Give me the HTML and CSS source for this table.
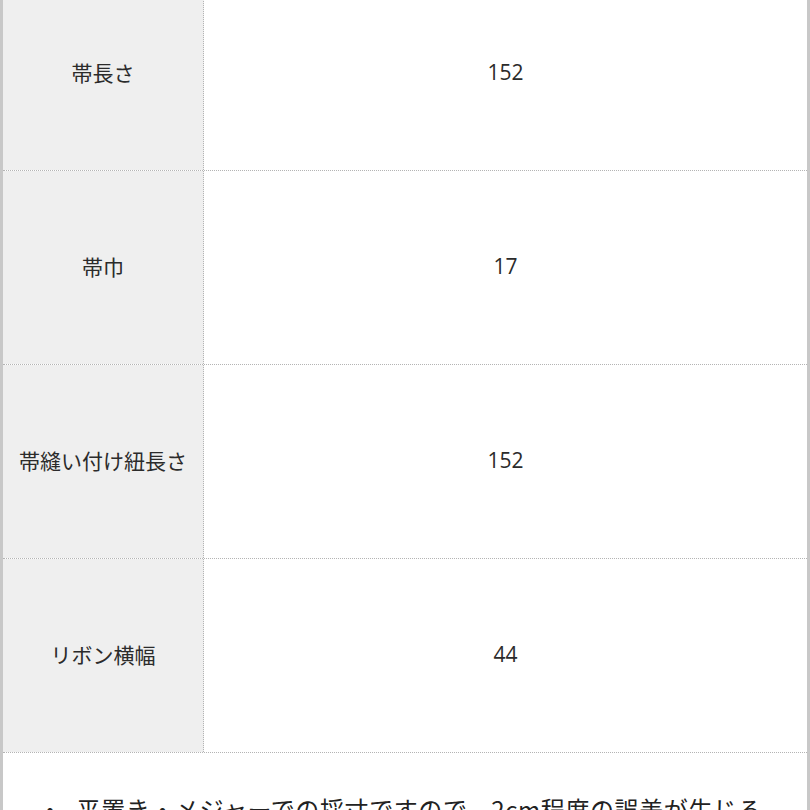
FILE: index.html
```html
<!DOCTYPE html>
<html lang="ja">
<head>
<meta charset="utf-8">
<link rel="stylesheet" href="styles.css">
</head>
<body>
<div class="frame">
  <div class="row">
    <div class="label">帯長さ</div>
    <div class="value">152</div>
  </div>
  <div class="row">
    <div class="label">帯巾</div>
    <div class="value">17</div>
  </div>
  <div class="row">
    <div class="label">帯縫い付け紐長さ</div>
    <div class="value">152</div>
  </div>
  <div class="row">
    <div class="label">リボン横幅</div>
    <div class="value">44</div>
  </div>
  <div class="note"><span class="bullet">・</span>平置き・メジャーでの採寸ですので、2cm程度の誤差が生じる場合がございます。</div>
</div>
</body>
</html>
```
FILE: styles.css
```css
html, body {
  margin: 0;
  padding: 0;
  background: #ffffff;
  overflow: hidden;
  height: 810px;
}
.frame {
  width: 804px;
  margin-top: -23px;
  border-left: 3px solid #c8c8c8;
  border-right: 3px solid #c8c8c8;
  font-family: "Noto Sans CJK JP", "Noto Sans", sans-serif;
  color: #2b2b2b;
}
.row {
  display: flex;
  height: 193px;
  border-bottom: 1px dotted #b4b4b4;
}
.label {
  width: 200px;
  background: #efefef;
  border-right: 1px dotted #b4b4b4;
  display: flex;
  align-items: center;
  justify-content: center;
  font-size: 21px;
  padding-bottom: 3px;
}
.value {
  flex: 1;
  display: flex;
  align-items: center;
  justify-content: center;
  font-size: 21px;
  font-family: "Open Sans", "Noto Sans", sans-serif;
  padding-bottom: 3px;
}
.note {
  padding: 38px 38px 40px 35px;
  font-size: 24px;
  line-height: 1.5;
  letter-spacing: 0.6px;
  color: #222222;
}
.bullet {
  margin-right: 14px;
}
```
